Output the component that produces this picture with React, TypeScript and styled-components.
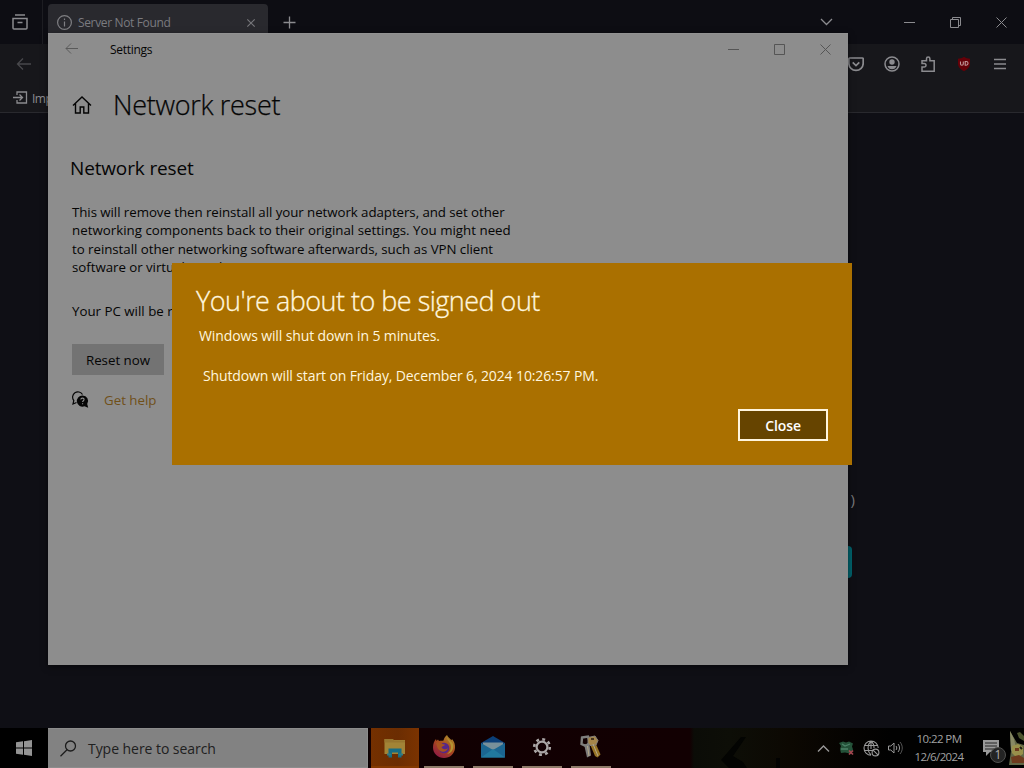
import React from 'react';
import styled, { createGlobalStyle, css } from 'styled-components';

const GlobalStyle = createGlobalStyle`
  * { box-sizing: border-box; }
  html, body { margin: 0; padding: 0; background: #0e0e14; overflow: hidden; }
  body { font-family: "Open Sans", "Noto Sans", sans-serif; }
  svg { display: block; flex: none; }
`;

const Desktop = styled.main`
  position: relative;
  width: 1024px;
  height: 768px;
  overflow: hidden;
  display: flex;
  flex-direction: column;
  background: #0f0f15;
`;

/* Browser window */
const Browser = styled.section`
  flex: 1;
  display: flex;
  flex-direction: column;
  color: #8b8b8f;
`;

const TabBar = styled.header`
  height: 44px;
  display: flex;
  align-items: center;
  background: #0d0d13;
`;

const ViewButton = styled.div`
  width: 43px;
  height: 44px;
  padding: 0 0 0 11px;
  display: flex;
  align-items: center;
  border-right: 1px solid #1d1d22;
`;

const Tab = styled.div`
  width: 220px;
  height: 40px;
  margin: 4px 0 0 5px;
  padding: 0 9px 3px 8px;
  display: flex;
  align-items: center;
  gap: 5px;
  border-radius: 4px 4px 0 0;
  background: #29292e;
`;

const TabTitle = styled.span`
  flex: 1;
  font-size: 12px;
  letter-spacing: -0.35px;
  color: #7b7b80;
`;

const NewTab = styled.div`
  margin-left: 15px;
  flex: 1;
`;

const WindowControls = styled.div<{ $gap: number; $right: number; $raise?: number; $tone?: string }>`
  display: flex;
  align-items: center;
  gap: ${(p) => p.$gap}px;
  padding-right: ${(p) => p.$right}px;
  padding-bottom: ${(p) => p.$raise ?? 0}px;
  color: ${(p) => p.$tone ?? 'inherit'};
`;

const TabListArrow = styled.div`
  margin-right: 71px;
`;

const NavBar = styled.div`
  height: 40px;
  display: flex;
  align-items: center;
  justify-content: space-between;
  padding: 0 16px;
  background: #17171b;
`;

const NavTools = styled.div`
  display: flex;
  gap: 20px;
`;

const BookmarkBar = styled.div`
  height: 29px;
  display: flex;
  gap: 4px;
  padding: 6px 0 0 13px;
  background: #17171b;
  border-bottom: 1px solid #29292e;
  font-size: 12px;
  line-height: 18px;
`;

const BookmarkLabel = styled.span`
  letter-spacing: -0.5px;
`;

const ErrorPage = styled.div`
  flex: 1;
  width: 856px;
  padding-top: 377px;
  display: flex;
  flex-direction: column;
  align-items: flex-end;
  gap: 38px;
`;

const ErrorText = styled.span`
  margin-right: 1px;
  font-size: 15px;
  line-height: 18px;
  color: #77777a;
`;

const RetryButton = styled.div`
  width: 90px;
  height: 32px;
  margin-right: 4px;
  border-radius: 4px;
  background: #00626c;
`;

/* Settings window */
const SettingsWindow = styled.section`
  position: absolute;
  left: 48px;
  top: 33px;
  width: 800px;
  height: 632px;
  display: flex;
  flex-direction: column;
  background: #8d8d8d;
  border-top: 1px solid #929292;
  box-shadow: 0 2px 6px rgba(0, 0, 0, 0.5);
  color: #050505;
`;

const SettingsTitleBar = styled.header`
  height: 31px;
  display: flex;
  align-items: center;
  padding-left: 17px;
`;

const BackButton = styled.div`
  padding-bottom: 2px;
`;

const SettingsTitle = styled.span`
  flex: 1;
  margin-left: 32px;
  font-size: 12px;
  line-height: 16px;
  letter-spacing: -0.3px;
`;

const PageHeader = styled.div`
  display: flex;
  align-items: center;
  height: 40px;
  margin-top: 20px;
  padding-left: 24px;
  gap: 21px;
`;

const PageTitle = styled.h1`
  margin: 0;
  font-size: 27px;
  line-height: 40px;
  font-weight: 300;
  letter-spacing: -0.3px;
  -webkit-text-stroke: 0.25px #050505;
`;

const PageBody = styled.div`
  display: flex;
  flex-direction: column;
  align-items: flex-start;
  padding: 29px 0 0 22px;
`;

const SectionTitle = styled.h2`
  margin: 0 0 21px;
  font-size: 19px;
  line-height: 28px;
  font-weight: 400;
  letter-spacing: -0.15px;
`;

const Paragraph = styled.p`
  margin: 0 0 25.5px 2px;
  font-size: 13.3px;
  line-height: 18.4px;
  white-space: pre;
`;

const Line = styled.span<{ $track: number }>`
  display: block;
  letter-spacing: ${(p) => p.$track}px;
`;

const ResetButton = styled.button`
  width: 92px;
  height: 31px;
  margin: -2px 0 0 2px;
  padding: 0;
  border: 0;
  background: #737373;
  color: #050505;
  font: 400 13.3px/32px "Open Sans", sans-serif;
`;

const HelpRow = styled.div`
  display: flex;
  align-items: center;
  gap: 14px;
  height: 24px;
  margin: 13px 0 0 2px;
`;

const HelpLink = styled.a`
  font-size: 13.3px;
  color: #705019;
`;

/* Sign-out dialog */
const Dialog = styled.section`
  position: absolute;
  left: 172px;
  top: 263px;
  width: 680px;
  height: 202px;
  display: flex;
  flex-direction: column;
  padding: 17px 24px 24px;
  background: #aa7000;
  color: #fff6df;
`;

const DialogTitle = styled.h2`
  margin: 0 0 6px;
  font-size: 27px;
  line-height: 41px;
  height: 40px;
  font-weight: 300;
  letter-spacing: -0.52px;
  white-space: nowrap;
  -webkit-text-stroke: 0.3px #fff6df;
`;

const DialogText = styled.p<{ $indent: number }>`
  margin: 0 0 20px ${(p) => p.$indent}px;
  font-size: 14px;
  line-height: 20px;
  letter-spacing: -0.12px;
  white-space: nowrap;
`;

const CloseButton = styled.button`
  width: 90px;
  height: 32px;
  margin: auto 0 0 auto;
  padding: 0;
  border: 2px solid #fff5de;
  background: #664400;
  color: #fff;
  font: 600 14px/30px "Open Sans", sans-serif;
  letter-spacing: -0.1px;
`;

/* Taskbar */
const Taskbar = styled.footer`
  height: 40px;
  display: flex;
  background: linear-gradient(90deg, #000 0 368px, #110002 369px, #120002 690px, #0b0c07 694px, #0d0e07 730px, #0c0802 790px, #050301 850px, #010101 890px);
`;

const StartButton = styled.div`
  width: 48px;
  display: flex;
  align-items: center;
  justify-content: center;
  background: #000;
`;

const SearchBox = styled.div`
  width: 320px;
  display: flex;
  align-items: center;
  gap: 11px;
  padding-left: 12px;
  background: #828282;
  border: solid #8c8c8c;
  border-width: 1px 1px 1px 0;
  color: #202020;
  font-size: 14px;
  letter-spacing: -0.05px;
`;

const TaskButtons = styled.div`
  display: flex;
  gap: 9px;
  margin-left: 3px;
`;

const TaskButton = styled.div<{ $active?: boolean }>`
  width: 40px;
  height: 40px;
  display: flex;
  align-items: center;
  justify-content: center;
  border-bottom: 2px solid #8f7c6a;
  ${(p) =>
    p.$active &&
    css`
      width: 48px;
      margin-right: -4px;
      border-bottom-color: #843900;
      background: linear-gradient(90deg, #743000, #6b2d02 55%, #7b3300);
    `}
`;

const Scenery = styled.div`
  flex: 1;
  padding-left: 99px;
`;

const Tray = styled.div`
  display: flex;
  align-items: center;
  color: #999;
`;

const TrayIcons = styled.div`
  display: flex;
  align-items: center;
  gap: 8px;
`;

const Clock = styled.div`
  width: 60px;
  margin: 0 0 0 4px;
  display: flex;
  flex-direction: column;
  align-items: center;
  font-size: 11.5px;
  line-height: 18px;
  letter-spacing: -0.6px;
  white-space: nowrap;
  color: #a2a2a2;
`;

const Notifications = styled.div`
  position: relative;
  margin-left: 13px;
  width: 27px;
  height: 40px;
  padding-top: 11px;
`;

const Badge = styled.span`
  position: absolute;
  left: 8px;
  top: 19px;
  width: 16px;
  height: 16px;
  border-radius: 50%;
  border: 1px solid #50504e;
  background: #242424;
  color: #b0b0b0;
  font-size: 12px;
  line-height: 14px;
  text-align: center;
`;

const Stroke = ({ w, h = w, d, sw = 1.3, color = 'currentColor' }: {
  w: number; h?: number; d: string; sw?: number; color?: string;
}) => (
  <svg width={w} height={h} viewBox={`0 0 ${w} ${h}`} fill="none" stroke={color} strokeWidth={sw}>
    <path d={d} />
  </svg>
);

const Controls = ({ restored }: { restored?: boolean }) => (
  <>
    <Stroke w={11} d="M0 5.5h11" sw={1} />
    {restored ? (
      <Stroke w={11} d="M.5 2.5h8v8h-8zM2.5 2.5v-2h8v8h-2" sw={1} />
    ) : (
      <Stroke w={11} d="M.5.5h10v10H.5z" sw={1} />
    )}
    <Stroke w={11} d="M.5.5l10 10M10.5.5l-10 10" sw={1} />
  </>
);

const NavIcons = () => (
  <NavTools>
    <Stroke w={16} d="M1.7 2h12.6c.5 0 .9.4.9.9v4.3a7.2 7.2 0 0 1-14.4 0V2.900c0-.5.4-.9.9-.9zM4.700 6.300L8 9.500l3.300-3.200" sw={1.7} />
    <svg width="16" height="16" viewBox="0 0 16 16" fill="currentColor">
      <circle cx="8" cy="8" r="7" fill="none" stroke="currentColor" strokeWidth="1.5" />
      <circle cx="8" cy="6" r="2.7" />
      <path d="M3.500 10h9c-.6 2-2.300 3.300-4.500 3.300S4.100 12 3.500 10z" />
    </svg>
    <Stroke w={16} d="M2 15.200V11h2.200a1.800 1.800 0 0 0 0-3.600H2V4.700h4.500V2.800a1.700 1.700 0 0 1 3.400 0v1.900h4.300v10.500z" sw={1.5} />
    <svg width="16" height="16" viewBox="0 0 16 16">
      <path d="M8 .8c2 1.400 4 1.900 6 2v4.800c0 3.500-2.500 5.800-6 7.600-3.500-1.800-6-4.100-6-7.600V2.800c2-.1 4-.6 6-2z" fill="#650008" />
      <path d="M4.500 5.500v2.500c0 1.600 2.800 1.600 2.800 0V5.500M9.200 5.500v3.700h1a1.850 1.850 0 0 0 0-3.700z" fill="none" stroke="#c09699" strokeWidth="1.100" />
    </svg>
    <Stroke w={16} d="M2 3.500h12M2 8h12M2 12.500h12" sw={1.4} />
  </NavTools>
);

const ExplorerIcon = () => (
  <svg width="24" height="24" viewBox="0 0 24 24">
    <path d="M1.500 4h8l1.500 1h11v14H1.500z" fill="#a28436" />
    <path d="M1.500 4h8l1.500 1.500h11v2H1.500z" fill="#97762f" />
    <path d="M5.500 13.500h13v9h-3.500v-5H9v5H5.500z" fill="#176d84" />
    <path d="M4 18.500h4v2H4zM16 18.500h4v2h-4z" fill="#2f7b83" />
  </svg>
);

const FirefoxIcon = () => (
  <svg width="24" height="24" viewBox="0 0 24 24">
    <defs>
      <linearGradient id="fox" x1=".85" y1="0" x2=".2" y2="1">
        <stop offset="0" stopColor="#ad902c" />
        <stop offset=".5" stopColor="#a8481e" />
        <stop offset="1" stopColor="#8d1748" />
      </linearGradient>
    </defs>
    <path d="M15 0c.8 2.500 3 3.300 4.500 5.200L20 4c2.200 2.500 3.300 5.300 3 9-.5 6-5 10-11 10S1 18.500 1 12.500c0-3.500 1-6.500 3-8.500l.5 2 1.500-1.500 1 1.500c2-.5 3 0 4.500-.5C12 3.500 13 1.500 15 0z" fill="url(#fox)" />
    <circle cx="12" cy="13" r="5.300" fill="#56278a" />
    <path d="M4 8c3-1.500 5-.5 6.500 1 1 .2 2 .4 2.500 1-1.500 1.500-3 1-3.500 2.500 1.500 2 4.500 2.500 6.500.5-1 4-6 5-9 2C5 13 5 10.500 4 8z" fill="#a65220" />
    <path d="M15 2c0 4 4 5 4 10 0 3-1.500 5-4 7 5-1 7-5 6-10-1.500-2.500-4.500-4-6-7z" fill="#b29231" />
  </svg>
);

const MailIcon = () => (
  <svg width="26" height="24" viewBox="0 0 26 24">
    <path d="M1 8L13 1l12 7v14H1z" fill="#0b3f78" />
    <path d="M3 7.500h20V16H3z" fill="#78909a" />
    <path d="M1 8l12 7 12-7v14.500H1z" fill="#1b6590" />
    <path d="M1 22.500L13 14l12 8.500z" fill="#21789d" />
  </svg>
);

const GearIcon = () => (
  <svg width="20" height="20" viewBox="0 0 20 20" fill="none" stroke="#aaa6a6">
    <circle cx="10" cy="10" r="7.800" strokeWidth="2.600" strokeDasharray="2.900 3.226" />
    <circle cx="10" cy="10" r="5.400" strokeWidth="2.200" />
  </svg>
);

const KeysIcon = () => (
  <svg width="24" height="24" viewBox="0 0 24 24" fill="none">
    <path d="M5 9l3 13.500 4-2-1.500-11z" fill="#7d7c7c" />
    <path d="M10.500 8l5.500 13 2.500 1.500 3-3L16.500 8z" fill="#977426" />
    <path d="M3 2.500l6-1 2 6-4 3.500-4.500-2z" stroke="#7f7f7e" strokeWidth="2.400" />
    <path d="M9 2.500l7-1.500 3 4.500-2 4.500-6 .5-2-3z" fill="#a5864a" stroke="#858079" />
    <path d="M8.500 11l1.500 10M14 9l5 12" stroke="#b4a98a" strokeWidth="1" />
    <path d="M12 4h3" stroke="#2a1a10" strokeWidth="1.500" />
  </svg>
);

const HelpIcon = () => (
  <svg width="18" height="18" viewBox="0 0 18 18">
    <path d="M4.500 11.500L1 13l.8-3.500A5.300 5.300 0 1 1 10.500 3.500" fill="none" stroke="#080808" strokeWidth="1.200" />
    <path d="M10.500 4.500a5.500 5.500 0 0 1 4.700 8.500l1 3.700-3.700-1.400A5.600 5.600 0 1 1 10.500 4.500z" fill="#050505" />
    <path d="M8.800 8.500c.2-2 3.400-1.700 3.300.1 0 1.100-1.500 1.200-1.500 2.500M10.600 12.200v1.100" fill="none" stroke="#8d8d8d" strokeWidth="1.100" />
  </svg>
);

const SceneryShape = () => (
  <svg width="70" height="40" viewBox="0 0 70 40">
    <path d="M31 9h5L23 28l10 6 4 6H19l-8-8z" fill="#030402" />
    <path d="M66 30h4v10h-4z" fill="#020201" />
  </svg>
);

const TrayStatus = () => (
  <TrayIcons>
    <Stroke w={13} h={9} d="M1 7.500l5.500-5.500L12 7.500" sw={1.4} />
    <svg width="17" height="16" viewBox="0 0 17 16">
      <path d="M1 3l4-1.500 3 1 3-1 4 2-1 3 1 3-3 4-5-1-4 .5L2 9l1-3z" fill="#245239" />
      <path d="M4 4l3 2 5-2M3 9h7" stroke="#4c8268" strokeWidth="1.300" fill="none" />
      <path d="M11 10.500l4 4M15 10.500l-4 4" stroke="#a34851" strokeWidth="1.700" />
    </svg>
    <svg width="17" height="17" viewBox="0 0 17 17" fill="none" stroke="currentColor" strokeWidth="1.100">
      <path d="M8 15.200A7.100 7.100 0 1 1 15.200 8M1.700 5.500h12.700M1.700 10.500H9M8 15c-4-4-4-10 0-14 2.200 2 3.200 4.500 3 7M8 1v8" />
      <circle cx="12.500" cy="12.500" r="3.400" />
      <path d="M10.100 10.100l4.800 4.800" />
    </svg>
    <svg width="17" height="16" viewBox="0 0 17 16" fill="none" stroke="currentColor" strokeWidth="1">
      <path d="M.5 6h2.300L6 3v10l-3.200-3H.5zM8 6c1 1.200 1 2.800 0 4M10 4c2 2.400 2 5.600 0 8" />
      <path d="M12 2c3 3.500 3 8.500 0 12" opacity=".55" />
    </svg>
  </TrayIcons>
);

const Figure = () => (
  <svg width="15" height="40" viewBox="0 0 15 40">
    <path d="M1 3l7 12 7 2v20H0l2-14z" fill="#626746" />
    <path d="M1 3l4 8 2 9-5 3z" fill="#888965" />
    <path d="M3 18l6-2 5 3v7l-6 4-5-5z" fill="#98904b" />
    <path d="M6 20h4v3H6zM2 29l8-2 5 3v5H3z" fill="#6e3b1e" />
    <path d="M11 19l2 2" stroke="#211f17" strokeWidth="2" />
    <path d="M8 5l3-1 4 4v5l-5-3z" fill="#4d542f" />
  </svg>
);

export default function App() {
  return (
    <>
      <GlobalStyle />
      <Desktop>
        <Browser>
          <TabBar>
            <ViewButton>
              <Stroke w={18} h={18} d="M2 5.500h14v9.500a1 1 0 0 1-1 1H3a1 1 0 0 1-1-1zM4 2h10M6.500 9.500h5" sw={1.5} />
            </ViewButton>
            <Tab>
              <svg width="17" height="17" viewBox="0 0 17 17" fill="none" stroke="#7f7f83" strokeWidth="1.200">
                <circle cx="8.500" cy="8.500" r="6.900" />
                <path d="M8.500 7.500v5M8.500 4.500v1.500" />
              </svg>
              <TabTitle>Server Not Found</TabTitle>
              <Stroke w={16} d="M4.300 4.300l7.400 7.400M11.700 4.300l-7.400 7.400" sw={1.1} color="#77777b" />
            </Tab>
            <NewTab>
              <Stroke w={13} d="M6.500 .5v12M.5 6.500h12" sw={1.3} />
            </NewTab>
            <TabListArrow>
              <Stroke w={13} h={8} d="M1 1l5.500 5.500L12 1" sw={1.3} />
            </TabListArrow>
            <WindowControls $gap={35} $right={17}>
              <Controls restored />
            </WindowControls>
          </TabBar>
          <NavBar>
            <Stroke w={16} d="M15 8H1.500M7 2.500L1.500 8 7 13.500" sw={1.3} color="#48484c" />
            <NavIcons />
          </NavBar>
          <BookmarkBar>
            <Stroke w={15} h={16} d="M4 5V2h9.500v11H4v-3M0 7.500h9M6.500 4.500l3 3-3 3" sw={1.3} />
            <BookmarkLabel>Imp</BookmarkLabel>
          </BookmarkBar>
          <ErrorPage>
            <ErrorText>)</ErrorText>
            <RetryButton />
          </ErrorPage>
        </Browser>

        <Taskbar>
          <StartButton>
            <svg width="16" height="16" viewBox="0 0 16 16" fill="#949494">
              <path d="M0 2.300l7-1v6.200H0zM8 1.200L16 0v7.500H8zM0 8.500h7v6.200l-7-1zM8 8.500h8V16l-8-1.200z" />
            </svg>
          </StartButton>
          <SearchBox>
            <svg width="17" height="17" viewBox="0 0 17 17" fill="none" stroke="#1c1c1c" strokeWidth="1.300">
              <circle cx="10.500" cy="6" r="5" />
              <path d="M7 9.700L.5 16.200" />
            </svg>
            Type here to search
          </SearchBox>
          <TaskButtons>
            <TaskButton $active><ExplorerIcon /></TaskButton>
            <TaskButton><FirefoxIcon /></TaskButton>
            <TaskButton><MailIcon /></TaskButton>
            <TaskButton><GearIcon /></TaskButton>
            <TaskButton><KeysIcon /></TaskButton>
          </TaskButtons>
          <Scenery><SceneryShape /></Scenery>
          <Tray>
            <TrayStatus />
            <Clock>
              <span>10:22 PM</span>
              <span>12/6/2024</span>
            </Clock>
            <Notifications>
              <svg width="18" height="18" viewBox="0 0 18 18">
                <path d="M1 1h16v12H8l-4 4v-4H1z" fill="#999" />
                <path d="M3 4h12M3 7h12M3 10h9" stroke="#242424" />
              </svg>
              <Badge>1</Badge>
            </Notifications>
            <Figure />
          </Tray>
        </Taskbar>

        <SettingsWindow>
          <SettingsTitleBar>
            <BackButton>
              <Stroke w={13} h={11} d="M13 5.500H1M6 .5l-5 5 5 5" sw={1} color="#5a5a5a" />
            </BackButton>
            <SettingsTitle>Settings</SettingsTitle>
            <WindowControls $gap={35} $right={17} $raise={1} $tone="#555">
              <Controls />
            </WindowControls>
          </SettingsTitleBar>
          <PageHeader>
            <Stroke w={20} h={20} d="M1 10.500L10 2l9 8.500M3.500 8.500v9.500h4.700v-6h3.600v6h4.700V8.500" sw={1.4} />
            <PageTitle>Network reset</PageTitle>
          </PageHeader>
          <PageBody>
            <SectionTitle>Network reset</SectionTitle>
            <Paragraph>
              <Line $track={-0.06}>This will remove then reinstall all your network adapters, and set other</Line>
              <Line $track={0.01}>networking components back to their original settings. You might need</Line>
              <Line $track={-0.04}>to reinstall other networking software afterwards, such as VPN client</Line>
              <Line $track={-0.04}>software or virtual switches.</Line>
            </Paragraph>
            <Paragraph>Your PC will be r</Paragraph>
            <ResetButton>Reset now</ResetButton>
            <HelpRow>
              <HelpIcon />
              <HelpLink>Get help</HelpLink>
            </HelpRow>
          </PageBody>
        </SettingsWindow>

        <Dialog>
          <DialogTitle>You're about to be signed out</DialogTitle>
          <DialogText $indent={3}>Windows will shut down in 5 minutes.</DialogText>
          <DialogText $indent={7}>Shutdown will start on Friday, December 6, 2024 10:26:57 PM.</DialogText>
          <CloseButton>Close</CloseButton>
        </Dialog>
      </Desktop>
    </>
  );
}
